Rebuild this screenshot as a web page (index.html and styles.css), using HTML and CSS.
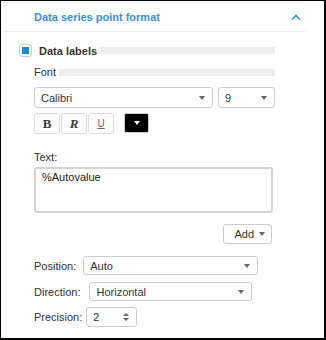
FILE: index.html
```html
<!DOCTYPE html>
<html lang="en">
<head>
    <meta charset="UTF-8">
    <title>Data series point format</title>
    <link rel="stylesheet" href="styles.css">
</head>
<body>
    <div class="panel">
        <div class="panel-head">
            <span class="panel-title">Data series point format</span>
            <svg class="chevron" width="10" height="6" viewBox="0 0 10 6"><path d="M1 5.5 L5 1.5 L9 5.5" fill="none" stroke="#3b8fd5" stroke-width="1.6"/></svg>
        </div>
        <div class="panel-body">
            <div class="check-row">
                <span class="checkbox"><span class="checkbox-mark"></span></span>
                <span class="check-label">Data labels</span>
                <span class="rule"></span>
            </div>
            <div class="sub">
                <div class="group-title">Font<span class="rule"></span></div>
                <div class="font-row">
                    <div class="select font-name"><span>Calibri</span><span class="caret"></span></div>
                    <div class="select font-size"><span>9</span><span class="caret"></span></div>
                </div>
                <div class="style-row">
                    <span class="style-btn bold">B</span>
                    <span class="style-btn italic">R</span>
                    <span class="style-btn under">U</span>
                    <span class="color-btn"><span class="caret white"></span></span>
                </div>
                <div class="field-label">Text:</div>
                <div class="textarea">%Autovalue</div>
                <div class="add-row">
                    <span class="add-btn">Add<span class="caret"></span></span>
                </div>
                <div class="inline-row">
                    <span class="inline-label pos-label">Position:</span>
                    <div class="select pos-select"><span>Auto</span><span class="caret"></span></div>
                </div>
                <div class="inline-row dir-row">
                    <span class="inline-label dir-label">Direction:</span>
                    <div class="select dir-select"><span>Horizontal</span><span class="caret"></span></div>
                </div>
                <div class="inline-row prec-row">
                    <span class="inline-label prec-label">Precision:</span>
                    <div class="select spinner"><span>2</span><span class="spin"><span class="caret up"></span><span class="caret"></span></span></div>
                </div>
            </div>
        </div>
    </div>
</body>
</html>
```
FILE: styles.css
```css
html, body {
    margin: 0;
    padding: 0;
}
body {
    width: 326px;
    height: 340px;
    box-sizing: border-box;
    border-style: solid;
    border-color: #000;
    border-width: 1px 2px 2px 1px;
    background-color: #fff;
    font-family: "Liberation Sans", Arial, sans-serif;
    font-size: 11px;
    color: #333;
}
.panel {
    width: 302px;
    margin: 1px 0 0 2px;
    border-top: 1px solid #eee;
}
.panel-head {
    height: 28px;
    display: flex;
    align-items: center;
    justify-content: space-between;
    padding: 0 4px 0 31px;
    border-bottom: 1px solid #eee;
}
.panel-title {
    color: #3b8fd5;
    font-weight: bold;
    font-size: 11px;
}
.panel-body {
    padding: 12px 0 0 16px;
}
.check-row {
    display: flex;
    align-items: center;
    width: 256px;
    height: 13px;
}
.checkbox {
    width: 11px;
    height: 11px;
    border: 1px solid #ccc;
    border-radius: 3px;
    display: flex;
    align-items: center;
    justify-content: center;
}
.checkbox-mark {
    width: 7px;
    height: 7px;
    background-color: #2a88cc;
}
.check-label {
    font-weight: bold;
    margin-left: 7px;
    margin-right: 3px;
}
.rule {
    flex: 1;
    height: 7px;
    background-color: #eee;
}
.sub {
    width: 241px;
    margin-left: 15px;
}
.group-title {
    display: flex;
    align-items: center;
    height: 14px;
    margin-top: 8px;
}
.group-title .rule {
    margin-left: 3px;
}
.select {
    box-sizing: border-box;
    display: flex;
    align-items: center;
    justify-content: space-between;
    border: 1px solid #ccc;
    border-radius: 3px;
    padding: 0 7px 0 6px;
    background-color: #fff;
}
.caret {
    width: 0;
    height: 0;
    border-left: 3.5px solid transparent;
    border-right: 3.5px solid transparent;
    border-top: 4px solid #666;
}
.caret.white {
    border-top-color: #fff;
}
.caret.up {
    border-top: 0;
    border-bottom: 4px solid #666;
}
.font-row {
    display: flex;
    gap: 5px;
    margin-top: 8px;
}
.font-name {
    width: 179px;
    height: 21px;
}
.font-size {
    width: 57px;
    height: 21px;
}
.style-row {
    display: flex;
    align-items: flex-start;
    gap: 1px;
    margin-top: 5px;
    height: 21px;
}
.style-btn {
    box-sizing: border-box;
    width: 26px;
    height: 21px;
    border: 1px solid #ddd;
    border-radius: 3px;
    display: flex;
    align-items: center;
    justify-content: center;
}
.bold {
    font-family: "Liberation Serif", "Times New Roman", serif;
    font-weight: bold;
    font-size: 13px;
    color: #3a3a3a;
}
.italic {
    font-family: "Liberation Serif", "Times New Roman", serif;
    font-weight: bold;
    font-style: italic;
    font-size: 13px;
    color: #3a3a3a;
}
.under {
    font-size: 10px;
    color: #666;
    text-decoration: underline;
}
.color-btn {
    box-sizing: border-box;
    width: 25px;
    height: 20px;
    margin-left: 9px;
    border: 1px solid #ccc;
    border-radius: 2px;
    background-color: #000;
    display: flex;
    align-items: center;
    justify-content: center;
}
.field-label {
    margin-top: 16px;
    line-height: 14px;
}
.textarea {
    box-sizing: border-box;
    width: 239px;
    height: 46px;
    margin-top: 3px;
    border: 2px solid #d4d4d4;
    border-radius: 3px;
    padding: 2px 0 0 6px;
    line-height: 13px;
    color: #222;
}
.add-row {
    display: flex;
    justify-content: flex-end;
    margin: 11px 3px 0 0;
}
.add-btn {
    box-sizing: border-box;
    width: 49px;
    height: 20px;
    border: 1px solid #ccc;
    border-radius: 3px;
    display: flex;
    align-items: center;
    justify-content: flex-end;
    padding-right: 6px;
}
.add-btn .caret {
    margin-left: 5px;
}
.inline-row {
    display: flex;
    align-items: center;
    margin-top: 12px;
}
.dir-row {
    margin-top: 7px;
}
.prec-row {
    margin-top: 6px;
}
.pos-label {
    margin-right: 7px;
}
.dir-label {
    margin-right: 9px;
}
.prec-label {
    margin-right: 4px;
}
.pos-select {
    width: 175px;
    height: 19px;
}
.dir-select {
    width: 163px;
    height: 19px;
}
.spinner {
    width: 51px;
    height: 20px;
    padding-right: 7px;
}
.spin {
    display: flex;
    flex-direction: column;
    gap: 2px;
}
.spin .caret {
    border-left-width: 3px;
    border-right-width: 3px;
}
.spin .caret.up {
    border-bottom-width: 3px;
}
.spin .caret:not(.up) {
    border-top-width: 3px;
}
```
